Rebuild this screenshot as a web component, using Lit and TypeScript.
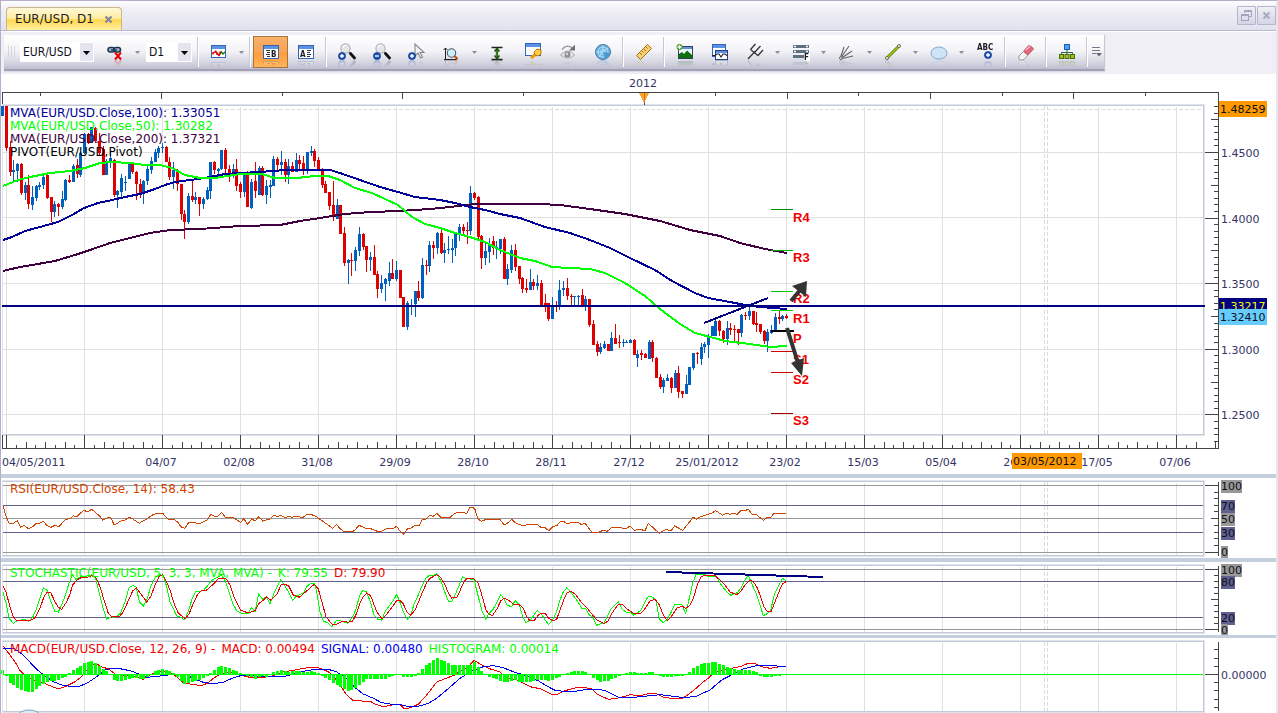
import { LitElement, html, svg, css } from "lit";
import { customElement } from "lit/decorators.js";

type Pt = [number, number];

/** Points stored on a 3x grid, shifted by the origin of their block. */
const pts = (ox: number, oy: number, s: string): Pt[] =>
  s.trim().split(/\s+/).map((p) => {
    const [x, y] = p.split(",").map(Number);
    return [ox + x / 3, oy + y / 3] as Pt;
  });
const raw = (s: string): Pt[] => s.trim().split(/\s+/).map((p) => p.split(",").map(Number) as Pt);
const poly = (p: Pt[]) => p.map(([x, y]) => `${x.toFixed(1)},${y.toFixed(1)}`).join(" ");

const STEP = 78 / 21;
const barX = (i: number) => Math.round(6 + STEP * i);

/* colour, high, body top, body bottom, low */
const block1 = `b 90 90 120 120;r 90 90 215 225;r 195 213 288 300;b 253 282 287 322;b 262 265 285 317;r 260 263 352 357;b 317 328 350 373;r 296 328 385 400;b 330 363 388 402;b 328 330 366 376;b 317 328 333 342;b 293 303 328 340;r 295 298 365 370;r 362 363 408 437;b 375 384 408 422;r 380 383 393 420;b 345 370 392 400;b 310 313 372 374;r 298 312 317 322;b 265 270 317 317;r 248 268 295 305;b 228 230 296 303;b 172 175 230 233;r 170 175 200 205;b 153 153 200 200;r 153 155 195 200;r 170 195 230 240;r 210 220 296 296;b 250 255 296 296;b 222 245 258 275;r 248 252 357 362;b 343 346 356 395;b 295 306 348 366;b 300 318 322 346;b 260 260 308 308;r 260 262 288 293;r 285 288 325 372;r 308 325 355 367;b 313 315 352 383;b 270 280 315 328;b 242 255 282 293;b 218 228 257 257;b 210 215 230 245;b 200 213 217 230;r 210 212 258 258;r 243 257 302 312;b 258 283 303 338;r 278 281 325 345;r 324 324 415 432;r 403 415 438 488;b 350 360 438 443;r 315 360 372 377;b 348 363 372 385;r 363 363 383 420;b 362 369 383 400;b 333 342 370 372;b 258 258 345 370;r 255 258 283 295;b 275 278 285 297;b 222 222 278 283;r 215 222 278 290;r 268 278 295 318;b 263 278 295 305;r 248 278 330 345;r 318 325 348 367;b 290 293 348 363;r 285 295 392 392;b 308 318 395 400;r 258 315 345 365;b 270 275 357 357`;
const block2 = `r 108 114 195 198;b 150 168 195 222;b 150 165 171 204;b 78 87 168 168;r 81 87 105 120;b 63 96 105 135;r 87 96 135 156;b 87 108 135 162;r 96 108 126 126;b 69 90 126 126;r 75 90 102 117;r 78 99 120 135;b 66 66 120 132;b 48 63 69 78;r 57 63 93 111;r 81 90 120 120;r 114 120 165 174;r 153 162 189 189;r 186 186 228 240;r 153 225 258 273;b 207 225 267 267;r 225 225 312 312;r 291 309 399 408;b 387 390 399 462;r 369 390 393 438;b 351 360 393 423;b 291 312 363 378;r 309 312 351 360;r 348 348 390 426;b 366 381 390 423;r 345 381 435 435;r 423 432 477 504;b 435 459 477 489;b 444 447 462 513;b 396 429 453 468;r 387 429 447 447;b 393 420 447 453;r 420 420 504 504;r 501 501 591 591;b 513 519 591 600;b 507 525 528 555;b 483 483 522 561;r 453 483 504 513;b 384 405 504 507;r 390 405 408 435;b 333 345 408 426;r 333 345 354 387;b 306 309 354 372;r 300 309 369 372;b 339 360 369 399;b 318 357 360 372;b 327 354 360 399;b 309 312 354 378;b 282 291 312 333;r 282 291 303 312;r 276 300 303 342;b 168 189 303 315;r 186 189 204 210;r 198 201 321 330;r 315 318 384 417;b 333 363 384 405;b 324 342 366 399;r 318 333 354 375;b 333 351 354 387;b 327 327 357 372;r 321 327 447 447;b 402 417 447 465;b 345 360 420 429;r 342 360 411 423;r 408 408 447 462`;
const block3 = `r 261 263 297 309;r 267 294 300 309;b 237 276 300 300;r 267 276 288 300;b 255 279 288 300;r 270 279 345 345;r 312 339 345 366;r 339 339 387 393;b 321 348 387 387;r 333 348 351 366;b 270 300 348 360;b 273 294 300 318;r 264 294 318 330;r 312 318 321 345;b 318 318 321 348;b 315 318 321 348;r 297 315 345 345;b 318 327 345 363;r 327 327 405 411;r 390 402 465 465;r 453 462 486 498;b 459 471 486 492;b 453 462 474 477;r 462 462 483 483;b 426 444 483 483;r 402 444 462 462;r 435 456 459 474;b 447 456 459 471;b 450 456 459 459;b 447 450 459 459;r 447 450 495 495;b 480 492 504 531;r 480 489 495 510;r 489 492 504 504;b 450 456 507 507;r 450 456 504 516;r 501 504 564 564;r 552 561 591 597;b 564 570 591 609;b 552 564 573 573;r 561 564 594 609;b 540 549 594 594;r 528 549 606 624;r 603 603 612 624;b 555 582 612 612;b 531 531 585 585;b 489 489 534 540;r 486 489 492 522;b 459 471 507 525;b 456 462 471 489;b 432 438 465 504;b 408 408 438 438;b 390 393 438 438;r 390 393 423 438;r 420 423 447 459;b 393 414 447 465;r 399 414 420 435;r 405 417 420 453;r 417 417 429 465;b 372 375 429 441;r 366 375 378 390;b 348 363 378 390;r 363 363 402 405;r 366 399 405 426;r 402 402 426 432;r 420 423 453 462;b 417 426 453 486;b 405 420 430 432;b 369 381 423 423;r 363 381 387 402;b 375 378 387 393;r 373 379 384 386`;

function candlePaths() {
  const out = { r: "", b: "" } as Record<string, string>;
  const add = (data: string, first: number, oy: number) =>
    data.split(";").forEach((row, k) => {
      const [c, ...n] = row.split(" ");
      const [h, t, b, l] = n.map((v) => Math.round(oy + Number(v) / 3));
      const x = barX(first + k);
      out[c] += `M${x} ${h}h1v${Math.max(1, l - h)}h-1zM${x - 1} ${t}h3v${Math.max(1, b - t)}h-3z`;
    });
  add(block1, -1, 76);
  add(block2, 69, 130);
  add(block3, 139, 190);
  return out;
}
const candles = candlePaths();

const mva100 = raw(`3,240 12,237 25,231 40,227 58,222 72,215 84,208 98,203 112,200 125,197 140,194 155,189 165,185 175,182 190,180 205,178 225,174 240,173 260,172 285,170 310,170 330,170 340,173 360,180 380,187 398,192 415,197 440,200 455,203 470,207 485,210 500,214 520,218 545,227 570,233 590,240 610,248 630,258 655,270 672,281 695,293 708,298 730,302 745,305 760,307 787,309`);
const mva50 = raw(`3,186 18,180 30,177 50,173 70,171 85,168 100,163 112,162 130,163 145,165 160,165 172,168 185,175 200,178 215,178 240,174 262,174 275,178 297,178 315,176 328,176 340,180 355,188 372,193 385,199 398,205 412,217 425,224 440,228 455,233 470,237 485,242 500,250 520,258 535,261 552,267 570,268 590,269 605,273 625,283 645,296 660,309 680,324 695,333 710,337 725,341 750,344 770,347 787,346`);
const mva200 = raw(`3,271 20,267 32,265 55,261 75,255 90,250 110,243 130,238 150,233 170,230 200,229 240,226 280,225 300,221 320,218 345,214 370,212 400,211 430,209 450,207 475,204 540,204 560,205 590,209 625,214 660,221 690,230 720,236 740,243 765,249 787,253`);

const rsi = [
  ...pts(0, 430, `7,220 18,258 27,280 40,280 52,272 62,292 73,286 85,296 98,290 108,280 120,279 130,274 140,286 153,292 165,286 176,290 186,280 198,268 210,266 220,257 230,261 242,248 253,241 262,246 275,238 287,248 300,259 308,270 320,264 332,262 342,284 352,280 365,271 375,270 387,262 398,267 418,280 430,272 442,266 455,256 470,250 488,250 497,260 508,270 522,268 533,276 542,290 554,295 566,278 575,278 600,280 612,275 622,270 632,253 645,260 655,258 665,247 677,263 700,263 722,277 731,266 743,283 755,266 765,273 776,260 788,273 810,267 822,256 832,260 843,256 855,263 865,259 877,262 888,258 900,261 910,262 920,253 932,253 945,258 955,264 970,275 985,285 998,295 1010,283 1020,296 1032,305 1057,305 1065,300 1077,286 1100,296 1112,296 1132,304 1145,303 1160,296 1180,295 1190,289 1199,303`),
  ...pts(400, 470, `10,193 22,177 33,174 45,166 57,168 66,150 78,147 90,136 100,139 110,130 122,142 150,142 165,130 178,127 200,130 210,112 218,112 225,118 234,147 245,154 258,148 300,148 312,165 322,160 335,148 347,159 365,166 412,163 422,172 435,173 446,182 460,169 470,167 480,156 490,154 500,160 535,157 545,165 555,159 570,180 577,187 590,189 610,181 622,184 635,172 680,175 690,168 702,181 720,178 735,182 745,160 770,183 778,190 790,182 800,178 812,183 824,168 848,181 862,164 880,142 890,148 900,141 935,129 947,122 968,136 980,129 990,133 1000,130 1012,133 1024,121 1037,121 1045,118 1057,133 1068,133 1090,151 1102,142 1112,143 1122,130 1158,130`),
];
const stochK = [
  ...pts(0, 430, `7,480 18,520 28,566 40,580 52,572 75,568 85,574 98,562 108,540 120,505 130,473 142,482 153,515 165,545 175,546 187,520 198,490 207,460 217,434 228,448 242,440 262,438 275,434 287,445 297,485 308,530 320,567 332,562 350,560 362,548 375,515 387,474 398,466 409,472 418,515 430,528 442,505 452,470 465,445 478,432 490,438 500,470 510,515 530,558 542,562 554,570 566,540 577,505 587,485 610,482 622,468 634,452 652,442 665,436 677,455 688,490 698,520 710,542 722,549 743,552 755,532 765,545 776,492 788,508 799,500 810,522 822,490 832,470 842,450 855,468 865,485 878,511 890,497 910,490 920,470 932,460 943,460 950,485 960,545 970,573 985,580 996,590 1010,571 1022,573 1043,580 1057,563 1067,540 1078,500 1088,481 1100,486 1112,520 1122,555 1134,568 1145,571 1155,545 1168,527 1180,512 1190,493 1199,515`),
  ...pts(400, 470, `12,430 22,448 32,435 43,400 55,375 67,345 78,325 88,316 100,316 110,311 122,332 133,362 145,393 155,395 165,375 178,345 188,320 200,326 222,328 235,380 245,420 257,447 268,430 278,420 290,398 302,373 312,388 322,406 335,410 345,392 358,404 368,440 378,458 390,450 400,438 412,421 425,433 435,450 446,464 460,446 468,430 480,390 490,365 500,354 512,366 523,380 535,397 545,415 557,416 568,435 578,440 590,466 602,461 612,459 622,440 632,418 645,405 655,395 668,420 680,427 693,428 701,436 713,428 724,419 735,395 745,379 757,381 768,392 778,447 790,458 802,448 812,430 824,403 846,405 857,430 868,385 878,340 888,312 912,312 922,318 950,320 960,340 980,365 992,376 1012,368 1022,355 1035,330 1045,316 1057,345 1068,370 1080,405 1090,437 1103,430 1112,420 1124,370 1137,345 1147,325 1158,332`),
];
const stochD = [
  ...pts(0, 430, `7,463 18,487 30,530 40,560 50,573 90,572 105,563 120,535 132,500 142,486 152,488 165,515 175,532 185,538 198,518 208,498 218,465 230,450 245,442 262,442 275,437 287,442 300,470 312,510 325,550 335,561 360,558 370,545 385,512 398,483 409,473 425,495 440,516 452,500 465,465 478,438 488,434 498,452 510,480 522,520 534,548 545,558 556,566 567,552 580,520 592,495 602,483 620,480 645,458 655,446 678,446 690,465 700,495 712,522 722,541 745,549 765,542 776,521 788,512 800,500 812,511 832,492 842,465 855,463 866,468 880,495 898,502 912,490 930,474 943,463 955,477 967,520 978,560 990,575 998,584 1012,582 1030,573 1045,577 1058,573 1070,550 1080,520 1090,500 1100,489 1112,497 1122,525 1132,548 1146,567 1160,553 1175,533 1190,512 1199,511`),
  ...pts(400, 470, `10,402 20,425 32,436 45,420 58,390 68,365 80,338 90,325 110,314 122,322 135,345 145,368 155,384 170,382 180,362 192,335 202,325 222,326 235,340 247,380 258,420 268,434 278,436 292,415 302,393 313,384 325,390 340,402 358,404 370,415 380,440 390,452 402,452 415,435 425,429 435,430 447,446 460,452 470,448 480,420 492,388 502,368 512,364 525,372 545,398 560,413 578,435 590,450 602,455 613,461 625,452 637,428 655,403 668,405 680,416 700,430 724,429 735,416 750,393 765,388 778,405 790,435 802,452 815,438 830,415 846,408 857,415 870,405 880,385 892,345 902,322 912,316 945,317 960,330 975,345 990,366 1010,374 1022,365 1035,345 1050,330 1060,335 1070,350 1080,375 1092,410 1102,425 1113,425 1125,395 1137,365 1147,342 1158,335`),
];
const macd = [
  ...pts(0, 430, `7,645 25,668 45,695 60,722 80,740 100,750 125,757 145,765 175,777 195,770 225,755 245,740 262,718 278,703 290,702 308,712 325,716 345,732 375,738 395,737 412,742 430,748 450,735 465,727 490,722 515,730 530,740 550,758 575,763 605,767 625,758 640,745 660,733 685,727 700,728 722,736 755,743 785,742 810,740 825,735 845,727 880,721 900,717 930,712 955,713 985,725 1000,738 1020,765 1040,795 1060,812 1085,813 1110,814 1130,824 1150,830 1175,825 1199,822`),
  ...pts(400, 470, `10,714 25,715 55,703 80,675 110,636 135,626 165,615 185,600 205,590 222,571 245,585 265,595 300,606 320,625 345,628 360,634 390,650 420,656 455,673 475,672 495,662 525,654 555,653 575,657 590,672 625,688 650,685 670,680 690,674 720,677 745,671 770,671 790,682 815,685 850,684 880,662 905,640 930,620 945,605 965,600 1020,590 1045,580 1065,580 1085,590 1110,595 1140,590 1158,590`),
];
const signal = [
  ...pts(0, 430, `7,656 45,657 65,672 90,697 110,718 135,738 160,755 185,765 210,769 240,768 260,760 280,747 300,733 315,720 335,715 360,716 390,722 420,733 440,742 480,738 520,733 560,735 585,748 610,757 640,761 670,757 700,743 730,735 780,739 850,740 880,733 910,724 940,719 985,718 1010,726 1040,745 1065,773 1090,792 1120,805 1145,818 1175,823 1199,823`),
  ...pts(400, 470, `20,709 55,709 85,700 110,685 140,660 180,625 215,603 250,590 280,587 310,593 340,605 380,618 415,632 440,648 465,661 510,666 550,660 600,658 620,664 655,682 690,683 740,678 780,674 855,683 890,678 930,660 965,630 1000,612 1030,597 1070,587 1120,587 1158,590`),
];
const histKeys = pts(0, 0, `7,10 18,-3 27,-20 40,-32 62,-45 85,-52 98,-50 108,-42 120,-32 130,-25 142,-20 165,-16 187,-10 198,-3 207,2 218,10 230,17 242,25 253,33 275,38 287,32 297,25 308,15 320,8 331,0 342,-15 360,-20 385,-13 400,-6 425,-12 445,-6 455,3 470,12 488,15 505,10 522,2 530,-4 542,-18 555,-28 575,-22 600,-14 620,-5 630,3 645,15 665,25 685,18 700,12 715,5 725,2 745,-3 765,-12 785,-4 800,-6 820,6 845,12 865,7 900,10 910,4 932,10 955,4 970,-5 990,-18 1010,-30 1022,-38 1040,-47 1057,-45 1075,-30 1100,-12 1150,-12 1165,-8 1180,-2 1195,3 1210,-7 1233,-5 1245,-2 1257,3 1267,16 1280,28 1298,43 1310,48 1322,43 1345,33 1355,28 1380,28 1395,25 1410,28 1422,35 1435,20 1445,7 1457,0 1468,-8 1490,-12 1510,-22 1525,-20 1545,-14 1558,-22 1580,-22 1612,-15 1630,-14 1646,-20 1660,-14 1680,-4 1695,2 1715,8 1745,10 1760,4 1770,-2 1780,-10 1800,-20 1822,-18 1840,-10 1858,-4 1875,2 1890,6 1925,3 1955,7 1970,0 1980,-4 2012,-7 2025,-3 2046,-4 2060,0 2070,10 2090,25 2112,32 2145,36 2165,27 2185,20 2205,13 2245,12 2268,6 2280,-2 2305,-8 2320,-5 2340,-1 2358,0`);
function histogramPath() {
  let d = "";
  for (let i = -1; i <= 210; i++) {
    const x = barX(i);
    const k = Math.max(1, histKeys.findIndex((p) => p[0] >= x));
    const [a, b] = [histKeys[k - 1], histKeys[k]];
    const v = Math.round(a[1] + ((b[1] - a[1]) * (x - a[0])) / (b[0] - a[0]));
    if (v) d += `M${x - 1} ${v > 0 ? 674 - v : 675}h3v${Math.abs(v)}h-3z`;
  }
  return d;
}

const gridX = Array.from({ length: 40 }, (_, i) => 6 + 78 * i);
const priceY = (p: number) => Math.round(152 + (1.45 - p) * 1312);

const vgrid = (top: number, bottom: number) =>
  gridX.map((x) => svg`<rect x=${x} y=${top} width="1" height=${bottom - top} fill="#e0e0e0"/>`);
const hline = (y: number, color: string, h = 1) =>
  svg`<rect x="2" y=${y} width="100%" height=${h} fill=${color}/>`;
const cursor = (top: number, bottom: number) => svg`
  <path d="M1044.5 ${top}V${bottom}M1047.5 ${top}V${bottom}" stroke="#dcdcdc" stroke-dasharray="4 2" fill="none"/>`;
const frame = (top: number, bottom: number) => svg`
  <rect x="2" y=${top} width="100%" height="1" fill="#e0e4ea"/>
  <rect x="2" y=${top + 1} width="100%" height="1" fill="#c2ccd8"/>
  <rect x="2" y=${bottom - 1} width="100%" height="1" fill="#c2ccd8"/>
  <rect x="2" y=${bottom} width="100%" height="1" fill="#e0e4ea"/>
  <rect x="2" y=${top} width="1" height=${bottom - top} fill="#dfe2e8"/>
  <g transform="translate(-1 0)">
    <rect x="100%" y=${top + 1} width="1" height=${bottom - top - 1} fill="#c2ccd8"/>
  </g>
  <rect x="100%" y=${top} width="1" height=${bottom - top + 1} fill="#e0e4ea"/>`;
const tick = (y: number, len: number) =>
  svg`<rect x=${1219 - len} y=${y} width=${len} height="1" fill="#444"/>`;
const tag = (y: number, h: number, w: number, bg: string, label: string) => svg`
  <rect x="1221" y=${y} width=${w} height=${h} fill=${bg}/>
  <text class="dark" x="1221" y=${y + 10}>${label}</text>`;

const badge = (x: number, y: number, minus = false) => svg`
  <circle cx=${x} cy=${y} r="3.6" fill="#1a50b4" stroke="#0a3280" stroke-width=".6"/>
  <path d="M${x - 2} ${y}h4${minus ? "" : `M${x} ${y - 2}v4`}" stroke="#fff" stroke-width="1.4"/>`;
const lens = svg`
  <circle cx="7.5" cy="5.5" r="4.6" fill="#e4e6ea" stroke="#b4b4b8" stroke-width="1.2"/>
  <path d="M4.5 4.5a3.4 3.4 0 0 1 4-2" stroke="#fff" stroke-width="1.4" fill="none"/>
  <path d="M11 9l2 2" stroke="#999" stroke-width="1.6"/><path d="M12.5 10.5l4 4.5" stroke="#111" stroke-width="2.8" stroke-linecap="round"/>`;
const windowBox = (x: number, y: number, w: number, h: number) => svg`
  <rect x=${x + 0.5} y=${y + 0.5} width=${w} height=${h} fill="#fff" stroke="#3764b0"/>
  <rect x=${x + 1} y=${y + 1} width=${w - 1} height="3" fill="#5a93e6"/>`;

const icons: Record<string, unknown> = {
  unlink: svg`<g fill="#9db8d4" stroke="#1c3550" stroke-width="1.600"><rect x="2" y="4.500" width="6.500" height="4.500" rx="2.200"/><rect x="8" y="4.500" width="6.500" height="4.500" rx="2.200"/></g><path d="M5 7h6" stroke="#1c3550" stroke-width="1.400"/><path d="M9 9.500l6 7M15 9.500l-6 7" stroke="#e80000" stroke-width="2"/>`,
  indicator: svg`${windowBox(1, 2, 14, 12)}<path d="M3 9.500v2M5 8.500h1.500M7 10v2M8.500 12h1M10 10.500v-2" stroke="#d00" stroke-width="1.400"/><path d="M2.500 10.500l3-2 2 2 1.500 2 2.500-4" stroke="#d00" fill="none" stroke-width="1.500"/><path d="M11 8.500l2 2.500 2-2" stroke="#080" fill="none" stroke-width="1.500"/>`,
  winB: svg`${windowBox(1, 2, 15, 13)}<path d="M4 7.500h4M5 9.500h3M4 11.500h4M5 13.500h3" stroke="#334"/><text class="glyph" x="9" y="14">B</text>`,
  winA: svg`${windowBox(1, 2, 15, 13)}<path d="M10 7.500h4M10 9.500h3M10 11.500h4M10 13.500h3" stroke="#334"/><text class="glyph" x="3" y="14">A</text>`,
  zoomIn: svg`${lens}${badge(4, 13)}`,
  zoomOut: svg`${lens}${badge(4, 13, true)}`,
  pointer: svg`<path d="M7 1v12l3-3 2.500 5 2-1-2.500-4.500h4z" fill="#f4f4f6" stroke="#888" stroke-width="1.1"/>${badge(4, 13)}`,
  scale: svg`<path d="M2.500 5v11M.5 7l2-2 2 2M1 16.500h13" stroke="#222" fill="none"/><circle cx="8.500" cy="10" r="4.200" fill="#c8f0fa" stroke="#556" stroke-width="1.100"/><path d="M11.500 13l3 3" stroke="#c84a10" stroke-width="2.200"/>`,
  fit: svg`<path d="M2.500 4.500h11M2.500 16.500h11" stroke="#222" stroke-width="1.400"/><path d="M8 5.500v10" stroke="#3c7c20" stroke-width="2.400"/><path d="M5.500 8.500l2.500-3 2.500 3M5.500 12.500l2.500 3 2.500-3" stroke="#225010" stroke-width="1.500" fill="none"/>`,
  key: svg`${windowBox(1, 0, 15, 12)}<path d="M7 15l5-4" stroke="#e8a010" stroke-width="3"/><path d="M10 9l3-3 4 1v4l-3 2-3-1z" fill="#ffcc44" stroke="#c07808"/>`,
  eye: svg`<path d="M1.500 12q7.500-8 14 0q-6.500 6-14 0z" fill="#ececf0" stroke="#a4a4aa"/><circle cx="8.500" cy="11.500" r="3" fill="#8c8c92"/><circle cx="8" cy="11" r="1.200" fill="#ddd"/><path d="M3 6.500q5-6 10-1.500" stroke="#999" fill="none" stroke-width="1.300"/><path d="M16 1.500v6h-6z" fill="#707074"/>`,
  globe: svg`<circle cx="9" cy="9" r="7.500" fill="#68b0e0" stroke="#3a78a8"/><g fill="none" stroke="#c8e8fa" stroke-width=".8"><circle cx="9" cy="9" r="5"/><circle cx="9" cy="9" r="2.500"/><path d="M9 9l5 4M9 9V2M9 9H2M9 9l-4 5M9 9l5-4"/></g><path d="M9 9l7 1a7 7 0 0 1-5 6z" fill="#4a9ccc"/>`,
  ruler: svg`<path d="M1.500 12.500l11-11 4 4-11 11z" fill="#f8d078" stroke="#a86f10"/><path d="M5 10l2 2M7 8l1.500 1.500M9 6l2 2M11 4l1.500 1.500" stroke="#a86f10"/>`,
  picture: svg`<rect x="2.500" y="3.500" width="14" height="12" fill="#eef6fc" stroke="#345"/><rect x="3" y="4" width="13" height="2" fill="#5a93e6"/><path d="M3 15v-4l3-2 2 2 3-3.500 5 4.500v3z" fill="#0c7010"/><circle cx="3.500" cy="4" r="3" fill="#4f9a28"/><path d="M1.500 4h4M3.500 2v4" stroke="#fff" stroke-width="1.300"/>`,
  compare: svg`${windowBox(1, 1, 13, 12)}<rect x="4.500" y="7.500" width="12" height="9" fill="#fff" stroke="#24407c"/><rect x="5" y="8" width="11" height="2" fill="#5a93e6"/><path d="M1 12.500h3l2-1.500 2 0 2 3 2-3h2l2 1.500" stroke="#223" fill="none" stroke-width="1.200"/>`,
  fork: svg`<path d="M2 16L9 8.500M4.500 6.500l8 6.500M4.500 6.500l5-5.500M8.500 9.500l6-6.500M12 12.500l5-5.500" stroke="#333" stroke-width="1.300"/>`,
  fibo: svg`<g fill="#5c7080"><rect x="1" y="2" width="16" height="3"/><rect x="1" y="7" width="16" height="3"/><rect x="1" y="12" width="11" height="3"/></g><g fill="#fff"><circle cx="3" cy="3.500" r="1"/><circle cx="15" cy="3.500" r="1"/><circle cx="3" cy="8.500" r="1"/><circle cx="15" cy="8.500" r="1"/><rect x="12" y="10" width="6" height="8"/></g><text class="glyph" x="12" y="17">F</text>`,
  fan: svg`<path d="M2 16L6 4M2 16L11 3M2 16L14 8M2 16L15 13" stroke="#666" stroke-width="1.100"/><circle cx="3" cy="15" r="1.500" fill="#ddd" stroke="#666"/>`,
  line: svg`<path d="M3 15L15 3" stroke="#557a00" stroke-width="3"/><path d="M3 15L15 3" stroke="#a4d010" stroke-width="1.400"/><circle cx="3" cy="15" r="1.500" fill="#fff" stroke="#664"/><circle cx="15" cy="3" r="1.500" fill="#fff" stroke="#664"/>`,
  ellipse: svg`<ellipse cx="9" cy="10" rx="8" ry="6" fill="#cfe4f6" stroke="#7fa8cc"/>`,
  label: svg`<text class="glyph" x="1" y="7">ABC</text>${badge(12, 12)}`,
  eraser: svg`<path d="M2 13l4.500-4.500 4.500 3.500-4 4.500q-3 1-4.500 0t-.5-3.500z" fill="#f4f4f4" stroke="#999"/><path d="M6.500 8.500L11.500 2.500q3 0 5 3.500L11 12z" fill="#e06878" stroke="#b86070"/><path d="M9 7l4-4" stroke="#f6b8c0" stroke-width="1.500"/>`,
  tree: svg`<path d="M9 5v6M3.500 12V9.500h11V12" stroke="#364" fill="none"/><rect x="6.500" y="1.500" width="5" height="5" fill="#4aa0f4" stroke="#1a60b8"/><g fill="#9cc41c" stroke="#4c7008"><rect x="1.500" y="11.500" width="4" height="4"/><rect x="7" y="11.500" width="4" height="4"/><rect x="12.500" y="11.500" width="4" height="4"/></g>`,
};

type Tool = [string, string] | "sep" | "caret";
const tools: Tool[] = [
  "sep", ["indicator", "Add indicator"], "caret", "sep", ["winB", "Bid prices"], ["winA", "Ask prices"], "sep",
  ["zoomIn", "Zoom in"], ["zoomOut", "Zoom out"], ["pointer", "Zoom to area"], ["scale", "Scale"], "caret",
  ["fit", "Fit vertically"], ["key", "Properties"], ["eye", "Show or hide"], ["globe", "Market map"], "sep",
  ["ruler", "Ruler"], "sep", ["picture", "Add picture"], ["compare", "Compare"], ["fork", "Pitchfork"], "caret",
  ["fibo", "Fibonacci"], "caret", ["fan", "Fan"], "caret", ["line", "Line"], "caret", ["ellipse", "Ellipse"], "caret",
  ["label", "Text label"], "sep", ["eraser", "Eraser"], "sep", ["tree", "Objects"], "sep",
];

@customElement("app-root")
export class AppRoot extends LitElement {
  static styles = css`
    :host { display: block; min-height: 100vh; font: 11px/13px "DejaVu Sans", Verdana, sans-serif; color: #1e1e28; background: #fff; }
    * { box-sizing: border-box; }
    button, select { font: inherit; color: inherit; margin: 0; padding: 0; border: 0; background: none; }
    svg { display: block; }
    .window { border-left: 1px solid #b2aecb; border-right: 2px solid #e4e3ee; border-top: 1px solid #b2aecb; }
    .title { display: flex; align-items: flex-end; justify-content: space-between; height: 30px; padding-left: 5px; border-bottom: 1px solid #b9b6d2; background: linear-gradient(#fdfdfe, #f0f0f6 30%, #e1e1ee); }
    .tab { display: flex; align-items: center; gap: 10px; height: 23px; padding: 0 8px; border: 1px solid #c9b58a; border-bottom: 0; border-radius: 4px 4px 0 0; background: linear-gradient(#fff8d8, #ffeea4 45%, #ffd850 55%, #fff0a0); font-size: 12px; }
    .tab .close { width: 9px; height: 9px; }
    .sys { display: flex; gap: 1px; align-self: flex-start; padding-top: 5px; }
    .sys button { display: grid; place-items: center; width: 19px; height: 19px; border: 1px solid #b4b4cc; border-radius: 1px; background: linear-gradient(#f0f0f8, #d4d4e4); }
    .strip { display: flex; height: 43px; padding: 3px; background: #f0eff5; border-top: 1px solid #fff; }
    .bar { display: flex; align-items: center; height: 36px; border-bottom: 2px solid #a3a1b8; border-right: 1px solid #c8c7d6; background: linear-gradient(#ffffff, #f4f4f8 45%, #d6d6e2 80%, #bfbed0); box-shadow: 0 1px 1px #dcdce6; }
    .grip { width: 16px; height: 12px; background: repeating-linear-gradient(90deg, #d4d4de 0 1px, transparent 1px 3px) 4px 0 / 7px 12px no-repeat; }
    .combo { position: relative; margin-right: 3px; }
    .combo select { appearance: none; display: block; height: 20px; width: 74px; padding-left: 3px; background: #fff; font: 12px/14px "DejaVu Sans Condensed", Tahoma, sans-serif; color: #10101c; border-radius: 0; }
    .combo.small select { width: 46px; }
    .combo svg { position: absolute; right: 1px; top: 1px; pointer-events: none; }
    .after { margin-left: 3px; }
    .sep { width: 2px; height: 30px; margin: 0 2px; background: linear-gradient(90deg, #c9c9d6 50%, #fff 50%); }
    .tool { display: grid; place-items: center; width: 35px; height: 32px; }
    .tool svg { -webkit-box-reflect: below -2px linear-gradient(transparent 55%, rgba(0, 0, 0, 0.3)); }
    .tool.on { border: 1px solid #a8743c; background: linear-gradient(#f9b16c, #f8a355 50%, #ff9c38 55%, #ffb45c); }
    .caret { display: grid; place-items: center; width: 11px; height: 30px; }
    .more { display: grid; place-items: center; width: 14px; height: 30px; }
    .pane { position: relative; display: grid; grid-template-columns: minmax(0, 1fr) 71px; background: #fff; overflow: hidden; }
    .pane + .pane { border-top: 4px solid #c4cfde; }
    .pane + .pane.thin { border-top-width: 3px; }
    .pane svg { width: 100%; overflow: hidden; shape-rendering: crispEdges; }
    text { fill: #333366; }
    .mid { text-anchor: middle; }
    .dark { fill: #101018; }
    .yellow { fill: #ffff00; }
    .glyph { font: bold 8px "DejaVu Sans Condensed", sans-serif; fill: #1c1c28; }
    .pivot { font: bold 13px "Liberation Sans", Arial, sans-serif; fill: #f00000; }
    .smooth { shape-rendering: auto; }
    .legend { position: absolute; left: 9px; top: 5px; display: flex; gap: 6px; white-space: pre; font-size: 12px; }
    .legend.stack { top: 33px; flex-direction: column; gap: 0; }
    .navy { color: #000099; } .lime { color: #00ff00; } .plum { color: #400040; } .ink { color: #000; }
    .rust { color: #d04400; } .red { color: #f00000; } .blue { color: #0000f0; }
  `;

  private icon(name: string) {
    return html`<svg width="18" height="18" viewBox="0 0 18 18" fill="none" aria-hidden="true">${icons[name]}</svg>`;
  }

  private caret() {
    return html`<button class="caret" aria-label="More options"><svg width="5" height="3" viewBox="0 0 5 3"><path d="M0 0h5L2.500 3z" fill="#8c8ca4"/></svg></button>`;
  }

  private combo(value: string, name: string, cls: string) {
    return html`<label class="combo ${cls}"><select aria-label=${name}><option>${value}</option></select>
      <svg width="13" height="18" viewBox="0 0 13 18"><rect width="13" height="18" fill="#e4e4ee"/><path d="M3 8h7l-3.500 4z" fill="#000"/></svg></label>`;
  }

  private toolbar() {
    return html`<div class="strip"><div class="bar" role="toolbar">
      <span class="grip"></span>
      ${this.combo("EUR/USD", "Instrument", "")}
      <button class="tool" aria-label="Unlink">${this.icon("unlink")}</button>${this.caret()}
      ${this.combo("D1", "Period", "small after")}
      ${tools.map((t) =>
        t === "sep" ? html`<span class="sep"></span>`
        : t === "caret" ? this.caret()
        : html`<button class="tool ${t[0] === "winB" ? "on" : ""}" aria-label=${t[1]}>${this.icon(t[0])}</button>`)}
      <button class="more" aria-label="Toolbar options"><svg width="10" height="10" viewBox="0 0 10 10"><path d="M0 .5h8M0 3.500h8M0 6.500h4" stroke="#77778c"/><path d="M4 6h6l-3 3.500z" fill="#66667c"/></svg></button>
    </div></div>`;
  }

  private pricePane() {
    const minorY = [];
    for (let n = 1230; n <= 1485; n += 5) {
      minorY.push(tick(priceY(n / 1000), n % 50 === 0 ? 15 : n % 25 === 0 ? 8 : 5));
    }
    const dates: [number, string][] = [[162, "04/07"], [240, "02/08"], [318, "31/08"], [396, "29/09"], [474, "28/10"], [552, "28/11"], [630, "27/12"], [708, "25/01/2012"], [786, "23/02"], [864, "15/03"], [942, "05/04"], [1020, "26/04"], [1098, "17/05"], [1176, "07/06"]];
    const pivots: [number, string, string, number][] = [[209, "#009000", "R4", 222], [250, "#00b400", "R3", 262], [291, "#00c800", "R2", 303], [310, "#00d800", "R1", 323], [351, "#d00000", "S1", 364], [372, "#d00000", "S2", 384], [413, "#a00000", "S3", 425]];
    return html`<section class="pane">
      <svg height="400"><g transform="translate(-1 -74)">
        <rect x="2" y="92" width="100%" height="1" fill="#444"/>
        <rect x="2" y="92" width="1" height="13" fill="#444"/>
        ${[40, 282, 523, 715, 858, 1002, 1145].map((x) => svg`<rect x=${x} y="92" width="1" height="4" fill="#444"/>`)}
        ${[161, 402, 787, 930, 1073].map((x) => svg`<rect x=${x} y="92" width="1" height="7" fill="#444"/>`)}
        <text class="mid" x="643" y="87">2012</text>
        ${vgrid(107, 434)}
        ${[152, 217, 283, 349, 414].map((y) => hline(y, "#e0e0e0"))}
        <path d="M3 109.500H2400" stroke="#dcdcdc" stroke-dasharray="4 2"/>
        ${cursor(106, 434)}
        ${frame(104, 435)}
        <path d=${candles.r} fill="#e00000"/><path d=${candles.b} fill="#0060c0"/>
        <polyline points=${poly(mva200)} fill="none" stroke="#400040" stroke-width="2"/>
        <polyline points=${poly(mva100)} fill="none" stroke="#000099" stroke-width="2"/>
        <polyline points=${poly(mva50)} fill="none" stroke="#00ff00" stroke-width="2"/>
        ${hline(305, "#000080", 2)}
        <path d="M704 323L768 298" stroke="#000080" stroke-width="2"/>
        ${pivots.map(([y, c, t, by]) => svg`<rect x="771" y=${y} width="22" height="1" fill=${c}/><text class="pivot" x="793" y=${by}>${t}</text>`)}
        <rect x="771" y="330" width="23" height="2" fill="#000"/><text class="pivot" x="793" y="343">P</text>
        <g class="smooth" fill="#333" stroke="#333">
          <path d="M791 301L801 289M787 328L798 363" stroke-width="4"/>
          <path d="M807 281l-1 16-14-11zM802 376l-11-13 13-5z" stroke="none"/>
        </g>
        <path d="M639 93h10l-5 10z" fill="#ffa52c"/><rect x="644" y="93" width="1" height="10" fill="#c07818"/><rect x="644" y="103" width="1" height="2" fill="#444"/>
        <rect x="2" y="448" width="100%" height="1" fill="#444"/>
        <rect x="2" y="435" width="1" height="13" fill="#444"/>
        ${gridX.map((g) => svg`<rect x=${g} y="435" width="1" height="13" fill="#444"/>
          ${[1, 2, 3, 4, 5, 6, 7].map((k) => svg`<rect x=${Math.round(g + 9.75 * k)} y=${k % 2 ? 445 : 442} width="1" height=${k % 2 ? 3 : 6} fill="#444"/>`)}`)}
        <text x="2" y="466">04/05/2011</text>
        ${dates.map(([x, t]) => svg`<text class="mid" x=${x - 1} y="466">${t}</text>`)}
        <rect x="1012" y="453" width="70" height="16" fill="#ff9900"/>
        <text class="dark" x="1013" y="465">03/05/2012</text>
      </g></svg>
      <svg height="400"><g transform="translate(-1205 -74)">
        <rect x="1205" y="92" width="14" height="1" fill="#444"/>
        <rect x="1205" y="448" width="14" height="1" fill="#444"/>
        <rect x="1215" y="442" width="1" height="6" fill="#444"/>
        <rect x="1218" y="92" width="1" height="357" fill="#444"/>
        ${minorY}
        ${[1.45, 1.4, 1.35, 1.3, 1.25].map((p) => svg`<text x="1221" y=${priceY(p) + 5}>${p.toFixed(4)}</text>`)}
        <rect x="1219" y="101" width="48" height="16" fill="#ff9900"/><text class="dark" x="1220" y="113">1.48259</text>
        <rect x="1219" y="298" width="48" height="12" fill="#000080"/><text class="yellow" x="1220" y="310">1.33217</text>
        <rect x="1219" y="309" width="48" height="16" fill="#66ccff"/><text class="dark" x="1220" y="321">1.32410</text>
      </g></svg>
      <div class="legend stack"><span class="navy">MVA(EUR/USD.Close,100): 1.33051</span><span class="lime">MVA(EUR/USD.Close,50): 1.30282</span><span class="plum">MVA(EUR/USD.Close,200): 1.37321</span><span class="ink">PIVOT(EUR/USD,Pivot)</span></div>
    </section>`;
  }

  private rsiPane() {
    return html`<section class="pane">
      <svg height="80"><g transform="translate(-1 -478)">
        ${vgrid(483, 555)}${cursor(482, 555)}
        ${hline(485, "#989898")}${hline(505, "#5f5f90")}${hline(518, "#989898")}${hline(532, "#5f5f90")}${hline(552, "#989898")}
        <polyline points=${poly(rsi)} fill="none" stroke="#d04400"/>
        ${frame(480, 556)}
      </g></svg>
      <svg height="80"><g transform="translate(-1205 -478)">
        <rect x="1218" y="482" width="1" height="74" fill="#444"/>
        ${[485, 492, 498, 505, 511, 518, 525, 532, 538, 545, 552].map((y) => tick(y, y === 485 || y === 552 ? 15 : y === 518 ? 8 : 5))}
        ${tag(480, 13, 21, "#989898", "100")}${tag(500, 13, 14, "#5f5f90", "70")}${tag(513, 13, 14, "#989898", "50")}${tag(527, 13, 14, "#5f5f90", "30")}${tag(546, 13, 7, "#989898", "0")}
      </g></svg>
      <div class="legend rust">RSI(EUR/USD.Close, 14): 58.43</div>
    </section>`;
  }

  private stochPane() {
    return html`<section class="pane">
      <svg height="73"><g transform="translate(-1 -562)">
        ${vgrid(567, 632)}${cursor(566, 632)}
        ${hline(569, "#989898")}${hline(581, "#5f5f90")}${hline(617, "#5f5f90")}${hline(629, "#989898")}
        <polyline points=${poly(stochK)} fill="none" stroke="#00ff00"/>
        <polyline points=${poly(stochD)} fill="none" stroke="#f00000"/>
        <path d="M666 572L823 577" stroke="#000080" stroke-width="2"/>
        ${frame(564, 633)}
      </g></svg>
      <svg height="73"><g transform="translate(-1205 -562)">
        <rect x="1218" y="566" width="1" height="66" fill="#444"/>
        ${[569, 575, 581, 587, 593, 599, 605, 611, 617, 623, 629].map((y) => tick(y, y === 569 || y === 629 ? 15 : y === 599 ? 8 : 5))}
        ${tag(564, 13, 21, "#989898", "100")}${tag(576, 13, 14, "#5f5f90", "80")}${tag(612, 13, 14, "#5f5f90", "20")}${tag(624, 13, 7, "#989898", "0")}
      </g></svg>
      <div class="legend"><span class="lime">STOCHASTIC(EUR/USD, 5, 3, 3, MVA, MVA) -</span><span class="lime">K: 79.55</span><span class="red">D: 79.90</span></div>
    </section>`;
  }

  private macdPane() {
    return html`<section class="pane thin">
      <svg height="75"><g transform="translate(-1 -638)">
        ${vgrid(643, 711)}${cursor(642, 711)}
        <polyline points=${poly(macd)} fill="none" stroke="#f00000"/>
        <polyline points=${poly(signal)} fill="none" stroke="#0000f0"/>
        <path d=${histogramPath()} fill="#00ff00"/>
        ${hline(674, "#00ff00")}
        ${frame(640, 712)}
        <ellipse class="smooth" cx="29" cy="716" rx="11" ry="6" fill="#dcebf6" stroke="#7fa0bc"/>
      </g></svg>
      <svg height="75"><g transform="translate(-1205 -638)">
        <rect x="1218" y="642" width="1" height="69" fill="#444"/>
        ${[649, 658, 666, 674, 682, 690, 699, 707].map((y) => tick(y, y === 674 ? 15 : 5))}
        <text x="1221" y="679">0.00000</text>
      </g></svg>
      <div class="legend"><span class="red">MACD(EUR/USD.Close, 12, 26, 9) -</span><span class="red">MACD: 0.00494</span><span class="blue">SIGNAL: 0.00480</span><span class="lime">HISTOGRAM: 0.00014</span></div>
    </section>`;
  }

  render() {
    return html`<div class="window">
      <header class="title">
        <button class="tab">EUR/USD, D1<svg class="close" viewBox="0 0 9 9"><path d="M1.500 1.500l6 6M7.500 1.500l-6 6" stroke="#8484a0" stroke-width="2.200"/></svg></button>
        <div class="sys">
          <button aria-label="Restore"><svg width="11" height="11" viewBox="0 0 11 11" fill="none" stroke="#a4a4c0"><path d="M3.500 3V.5h7v6H8M3 1.500h7"/><rect x=".5" y="4.500" width="7" height="6"/><path d="M1 5.500h6"/></svg></button>
          <button aria-label="Close"><svg width="9" height="9" viewBox="0 0 9 9"><path d="M1.500 1.500l6 6M7.500 1.500l-6 6" stroke="#a8a8c2" stroke-width="2"/></svg></button>
        </div>
      </header>
      ${this.toolbar()}
      <main>${this.pricePane()}${this.rsiPane()}${this.stochPane()}${this.macdPane()}</main>
    </div>`;
  }
}
